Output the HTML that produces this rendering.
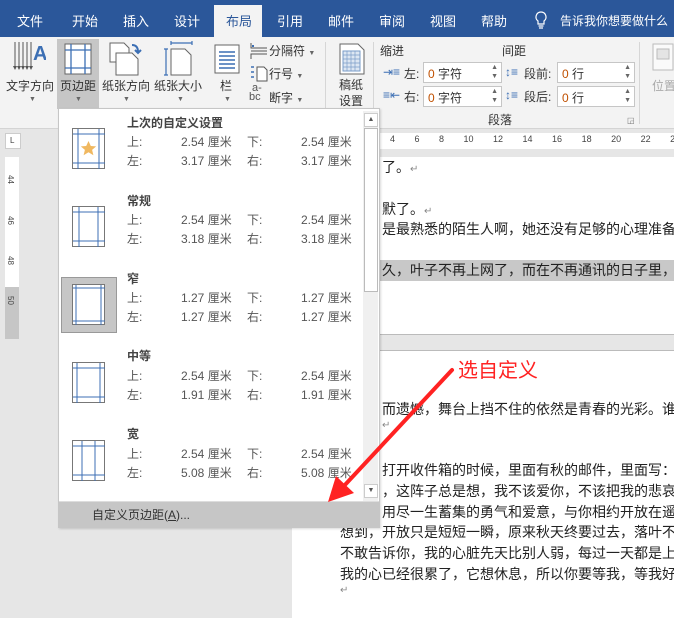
<!DOCTYPE html>
<html><head><meta charset="utf-8"><style>
*{margin:0;padding:0;box-sizing:border-box}
body{width:674px;height:618px;overflow:hidden;position:relative;background:#e6e6e6;font-family:"Liberation Sans","Noto Sans CJK SC",sans-serif;color:#444}
.a{position:absolute;white-space:nowrap}
.tab{position:absolute;top:11px;color:#fff;font-size:13px;white-space:nowrap}
.rl{font-size:12px;color:#333}
.dd{font-size:7px;color:#666}
.box{position:absolute;background:#fff;border:1px solid #c6c6c6;height:21px;font-size:12px;padding:2px 4px;color:#333}
.m{font-size:12px;color:#555}
.mt{font-size:12px;font-weight:bold;color:#444}
.doc{font-size:14px;color:#222}
</style></head><body>
<div class="a" style="left:0;top:0;width:674px;height:37px;background:#2b579a"></div>
<div class="a" style="left:214px;top:5px;width:48px;height:32px;background:#f3f3f3"></div>
<div class="tab" style="left:17px">文件</div>
<div class="tab" style="left:72px">开始</div>
<div class="tab" style="left:123px">插入</div>
<div class="tab" style="left:174px">设计</div>
<div class="tab" style="left:226px;color:#2b579a">布局</div>
<div class="tab" style="left:277px">引用</div>
<div class="tab" style="left:328px">邮件</div>
<div class="tab" style="left:379px">审阅</div>
<div class="tab" style="left:430px">视图</div>
<div class="tab" style="left:481px">帮助</div>
<svg class="a" style="left:534px;top:11px" width="14" height="18" viewBox="0 0 14 18"><path d="M7 1a5 5 0 0 0-3 9v3h6v-3a5 5 0 0 0-3-9zM4.5 15h5M5 17h4" fill="none" stroke="#fff" stroke-width="1.2"/></svg>
<div class="tab" style="left:560px;font-size:12px;top:12px">告诉我你想要做什么</div>
<div class="a" style="left:0;top:37px;width:674px;height:92px;background:#f3f3f3;border-bottom:1px solid #d4d4d4"></div>
<div class="a" style="left:57px;top:39px;width:42px;height:70px;background:#c6c6c6"></div>
<svg class="a" style="left:12px;top:40px" width="34" height="32" viewBox="0 0 34 32"><g stroke="#555" stroke-width="1"><path d="M3 2v26M7 2v26M11 2v26M15 2v26M19 2v26"/></g><g fill="#555"><path d="M1 26h4l-2 4zM5 26h4l-2 4zM9 26h4l-2 4zM13 26h4l-2 4zM17 26h4l-2 4z"/></g><text x="21" y="20" font-size="20" font-weight="bold" fill="#3c6fb4" font-family="Liberation Sans">A</text></svg>
<svg class="a" style="left:64px;top:43px" width="28" height="32" viewBox="0 0 28 32"><rect x="1" y="1" width="26" height="30" fill="#fff" stroke="#666"/><path d="M7 1v30M21 1v30M1 7h26M1 25h26" stroke="#3c6fb4" stroke-width="1.3"/></svg>
<svg class="a" style="left:106px;top:41px" width="38" height="36" viewBox="0 0 38 36"><path d="M4 2h14l5 5v14H4z" fill="#fff" stroke="#666"/><path d="M10 12h16l6 6v16H10z" fill="#fff" stroke="#666"/><path d="M26 4q6 0 6 7M29 9l3 3 3-3" fill="none" stroke="#3c6fb4" stroke-width="2"/></svg>
<svg class="a" style="left:164px;top:41px" width="30" height="36" viewBox="0 0 30 36"><path d="M7 2h21M7 0v4M28 0v4M2 8v26M0 8h4M0 34h4" stroke="#3c6fb4" stroke-width="1.2"/><path d="M7 8h14l6 6v20H7z" fill="#fff" stroke="#666"/></svg>
<svg class="a" style="left:214px;top:44px" width="26" height="30" viewBox="0 0 26 30"><rect x="1" y="1" width="24" height="28" fill="#fff" stroke="#666"/><path d="M5 8h16M5 12h16M5 16h16M5 20h16M5 24h16" stroke="#3c6fb4" stroke-width="1.4"/></svg>
<div class="a rl" style="left:6px;top:77px">文字方向</div>
<div class="a rl" style="left:60px;top:77px">页边距</div>
<div class="a rl" style="left:102px;top:77px">纸张方向</div>
<div class="a rl" style="left:154px;top:77px">纸张大小</div>
<div class="a rl" style="left:220px;top:77px">栏</div>
<div class="a dd" style="left:29px;top:96px">▼</div>
<div class="a dd" style="left:75px;top:96px">▼</div>
<div class="a dd" style="left:123px;top:96px">▼</div>
<div class="a dd" style="left:177px;top:96px">▼</div>
<div class="a dd" style="left:224px;top:96px">▼</div>
<svg class="a" style="left:249px;top:42px" width="20" height="18"><path d="M2 1v5h16M2 17v-5h16M2 9h16" fill="none" stroke="#555"/><path d="M4 3v2" stroke="#3c6fb4" stroke-width="2"/></svg>
<div class="a rl" style="left:269px;top:42px">分隔符 <span class="dd">▼</span></div>
<svg class="a" style="left:249px;top:65px" width="20" height="18"><path d="M2 2h3M2 7h3M2 12h3" stroke="#3c6fb4" stroke-width="1.5"/><path d="M8 2h7l3 3v11H8z" fill="#fff" stroke="#555"/></svg>
<div class="a rl" style="left:269px;top:65px">行号 <span class="dd">▼</span></div>
<div class="a" style="left:249px;top:84px;font-size:11px;color:#555;line-height:9px">&nbsp;a-<br>bc</div>
<div class="a rl" style="left:269px;top:89px">断字 <span class="dd">▼</span></div>
<div class="a" style="left:325px;top:42px;width:1px;height:82px;background:#d6d6d6"></div>
<svg class="a" style="left:339px;top:43px" width="26" height="32"><path d="M1 1h18l6 6v24H1z" fill="#fff" stroke="#666"/><path d="M4 8h17v20H4z" fill="#dce6f2" stroke="#7a9cc8"/><path d="M4 12h17M4 16h17M4 20h17M4 24h17M8 8v20M12 8v20M16 8v20" stroke="#7a9cc8" stroke-width=".7"/></svg>
<div class="a rl" style="left:339px;top:77px;line-height:16px">稿纸<br>设置</div>
<div class="a" style="left:373px;top:42px;width:1px;height:82px;background:#d6d6d6"></div>
<div class="a rl" style="left:380px;top:42px">缩进</div>
<div class="a rl" style="left:502px;top:42px">间距</div>
<div class="a rl" style="left:383px;top:65px;color:#3c6fb4">⇥≡</div>
<div class="a rl" style="left:404px;top:65px">左:</div>
<div class="box" style="left:423px;top:62px;width:79px"><span style="color:#c05000">0</span> 字符<span class="a" style="right:3px;top:0;font-size:7px;line-height:9px;color:#666">▲<br>▼</span></div>
<div class="a rl" style="left:383px;top:88px;color:#3c6fb4">≡⇤</div>
<div class="a rl" style="left:404px;top:88px">右:</div>
<div class="box" style="left:423px;top:86px;width:79px"><span style="color:#c05000">0</span> 字符<span class="a" style="right:3px;top:0;font-size:7px;line-height:9px;color:#666">▲<br>▼</span></div>
<div class="a rl" style="left:505px;top:65px;color:#3c6fb4">↕≡</div>
<div class="a rl" style="left:524px;top:65px">段前:</div>
<div class="box" style="left:557px;top:62px;width:78px"><span style="color:#c05000">0</span> 行<span class="a" style="right:3px;top:0;font-size:7px;line-height:9px;color:#666">▲<br>▼</span></div>
<div class="a rl" style="left:505px;top:88px;color:#3c6fb4">↕≡</div>
<div class="a rl" style="left:524px;top:88px">段后:</div>
<div class="box" style="left:557px;top:86px;width:78px"><span style="color:#c05000">0</span> 行<span class="a" style="right:3px;top:0;font-size:7px;line-height:9px;color:#666">▲<br>▼</span></div>
<div class="a rl" style="left:488px;top:111px">段落</div>
<div class="a" style="left:627px;top:116px;font-size:8px;color:#777">◲</div>
<div class="a" style="left:639px;top:42px;width:1px;height:82px;background:#d6d6d6"></div>
<svg class="a" style="left:652px;top:43px" width="22" height="28"><rect x="1" y="1" width="20" height="26" fill="#fafafa" stroke="#bbb"/><rect x="5" y="6" width="12" height="10" fill="#e4e4e4" stroke="#bbb"/></svg>
<div class="a rl" style="left:652px;top:77px;color:#aaa">位置</div>
<div class="a" style="left:5px;top:133px;width:16px;height:16px;background:#fff;border:1px solid #ccc"></div>
<div class="a" style="left:10px;top:136px;font-size:8px;color:#444">L</div>
<div class="a" style="left:5px;top:157px;width:14px;height:130px;background:#fff"></div>
<div class="a" style="left:5px;top:287px;width:14px;height:52px;background:#c6c6c6"></div>
<div class="a" style="left:6px;top:175px;font-size:8px;transform:rotate(90deg);color:#444">44</div>
<div class="a" style="left:6px;top:216px;font-size:8px;transform:rotate(90deg);color:#444">46</div>
<div class="a" style="left:6px;top:256px;font-size:8px;transform:rotate(90deg);color:#444">48</div>
<div class="a" style="left:6px;top:296px;font-size:8px;transform:rotate(90deg);color:#444">50</div>
<div class="a" style="left:292px;top:133px;width:382px;height:16px;background:#fff"></div>
<div class="a" style="left:390px;top:134px;font-size:9px;color:#444;word-spacing:17px">4 6 8 10 12 14 16 18 20 22 24</div>
<div class="a" style="left:292px;top:157px;width:382px;height:178px;background:#fff;border-bottom:1px solid #bbb"></div>
<div class="a" style="left:292px;top:350px;width:382px;height:268px;background:#fff;border-top:1px solid #bbb"></div>
<div class="a" style="left:292px;top:260px;width:382px;height:21px;background:#c8c8c8"></div>
<div class="a doc" style="left:382px;top:157px">了。<span style="color:#888;font-size:10px">↵</span></div>
<div class="a doc" style="left:382px;top:199px">默了。<span style="color:#888;font-size:10px">↵</span></div>
<div class="a doc" style="left:382px;top:219px">是最熟悉的陌生人啊，她还没有足够的心理准备</div>
<div class="a doc" style="left:382px;top:260px">久，叶子不再上网了，而在不再通讯的日子里，</div>
<div class="a doc" style="left:382px;top:399px">而遗憾，舞台上挡不住的依然是青春的光彩。谁</div>
<div class="a doc" style="left:382px;top:420px;color:#888;font-size:10px">↵</div>
<div class="a doc" style="left:382px;top:460px">打开收件箱的时候，里面有秋的邮件，里面写：</div>
<div class="a doc" style="left:382px;top:481px">，这阵子总是想，我不该爱你，不该把我的悲哀</div>
<div class="a doc" style="left:382px;top:502px">用尽一生蓄集的勇气和爱意，与你相约开放在遥</div>
<div class="a doc" style="left:340px;top:522px">想到，开放只是短短一瞬，原来秋天终要过去，落叶不</div>
<div class="a doc" style="left:340px;top:543px">不敢告诉你，我的心脏先天比别人弱，每过一天都是上</div>
<div class="a doc" style="left:340px;top:564px">我的心已经很累了，它想休息，所以你要等我，等我好</div>
<div class="a doc" style="left:340px;top:585px;color:#888;font-size:10px">↵</div>
<div class="a" style="left:458px;top:354px;font-size:20px;color:#f22">选自定义</div>
<div class="a" style="left:58px;top:108px;width:322px;height:420px;background:#fff;border:1px solid #c6c6c6;box-shadow:1px 1px 2px rgba(0,0,0,.15)"></div>
<div class="a" style="left:363px;top:111px;width:15px;height:390px;background:#f0f0f0"></div>
<div class="a" style="left:364px;top:113px;width:14px;height:14px;background:#fff;border:1px solid #ccc;font-size:7px;text-align:center;line-height:12px;color:#555">▲</div>
<div class="a" style="left:364px;top:128px;width:14px;height:164px;background:#fff;border:1px solid #bbb"></div>
<div class="a" style="left:364px;top:484px;width:14px;height:14px;background:#fff;border:1px solid #ccc;font-size:7px;text-align:center;line-height:12px;color:#555">▼</div>
<div class="a" style="left:59px;top:501px;width:320px;height:26px;background:#c6c6c6;border-top:1px solid #ddd"></div>
<div class="a" style="left:92px;top:506px;font-size:12px;color:#333">自定义页边距(<u>A</u>)...</div>
<div class="a" style="left:61px;top:277px;width:56px;height:56px;background:#c6c6c6;border:1px solid #999"></div>
<svg class="a" style="left:72px;top:128px" width="34" height="42"><rect x=".5" y=".5" width="32" height="40" fill="#fff" stroke="#777"/><path d="M6 1v40M27 1v40M1 6h32M1 35h32" stroke="#3c6fb4"/><path d="M16.5 13l2.3 5 5.4.4-4.1 3.5 1.3 5.3-4.9-2.9-4.9 2.9 1.3-5.3-4.1-3.5 5.4-.4z" fill="#f0b860"/></svg>
<svg class="a" style="left:72px;top:206px" width="34" height="42"><rect x=".5" y=".5" width="32" height="40" fill="#fff" stroke="#777"/><path d="M7 1v40M26 1v40M1 6h32M1 35h32" stroke="#3c6fb4"/></svg>
<svg class="a" style="left:72px;top:284px" width="34" height="42"><rect x=".5" y=".5" width="32" height="40" fill="#fff" stroke="#777"/><path d="M4 1v40M29 1v40M1 4h32M1 37h32" stroke="#3c6fb4"/></svg>
<svg class="a" style="left:72px;top:362px" width="34" height="42"><rect x=".5" y=".5" width="32" height="40" fill="#fff" stroke="#777"/><path d="M5 1v40M28 1v40M1 6h32M1 35h32" stroke="#3c6fb4"/></svg>
<svg class="a" style="left:72px;top:440px" width="34" height="42"><rect x=".5" y=".5" width="32" height="40" fill="#fff" stroke="#777"/><path d="M10 1v40M23 1v40M1 6h32M1 35h32" stroke="#3c6fb4"/></svg>
<div class="a mt" style="left:127px;top:114px">上次的自定义设置</div>
<div class="a m" style="left:127px;top:133px">上:</div><div class="a m" style="left:181px;top:133px">2.54 厘米</div><div class="a m" style="left:247px;top:133px">下:</div><div class="a m" style="left:301px;top:133px">2.54 厘米</div>
<div class="a m" style="left:127px;top:152px">左:</div><div class="a m" style="left:181px;top:152px">3.17 厘米</div><div class="a m" style="left:247px;top:152px">右:</div><div class="a m" style="left:301px;top:152px">3.17 厘米</div>
<div class="a mt" style="left:127px;top:192px">常规</div>
<div class="a m" style="left:127px;top:211px">上:</div><div class="a m" style="left:181px;top:211px">2.54 厘米</div><div class="a m" style="left:247px;top:211px">下:</div><div class="a m" style="left:301px;top:211px">2.54 厘米</div>
<div class="a m" style="left:127px;top:230px">左:</div><div class="a m" style="left:181px;top:230px">3.18 厘米</div><div class="a m" style="left:247px;top:230px">右:</div><div class="a m" style="left:301px;top:230px">3.18 厘米</div>
<div class="a mt" style="left:127px;top:270px">窄</div>
<div class="a m" style="left:127px;top:289px">上:</div><div class="a m" style="left:181px;top:289px">1.27 厘米</div><div class="a m" style="left:247px;top:289px">下:</div><div class="a m" style="left:301px;top:289px">1.27 厘米</div>
<div class="a m" style="left:127px;top:308px">左:</div><div class="a m" style="left:181px;top:308px">1.27 厘米</div><div class="a m" style="left:247px;top:308px">右:</div><div class="a m" style="left:301px;top:308px">1.27 厘米</div>
<div class="a mt" style="left:127px;top:347px">中等</div>
<div class="a m" style="left:127px;top:367px">上:</div><div class="a m" style="left:181px;top:367px">2.54 厘米</div><div class="a m" style="left:247px;top:367px">下:</div><div class="a m" style="left:301px;top:367px">2.54 厘米</div>
<div class="a m" style="left:127px;top:386px">左:</div><div class="a m" style="left:181px;top:386px">1.91 厘米</div><div class="a m" style="left:247px;top:386px">右:</div><div class="a m" style="left:301px;top:386px">1.91 厘米</div>
<div class="a mt" style="left:127px;top:425px">宽</div>
<div class="a m" style="left:127px;top:445px">上:</div><div class="a m" style="left:181px;top:445px">2.54 厘米</div><div class="a m" style="left:247px;top:445px">下:</div><div class="a m" style="left:301px;top:445px">2.54 厘米</div>
<div class="a m" style="left:127px;top:464px">左:</div><div class="a m" style="left:181px;top:464px">5.08 厘米</div><div class="a m" style="left:247px;top:464px">右:</div><div class="a m" style="left:301px;top:464px">5.08 厘米</div>
<svg class="a" style="left:0;top:0" width="674" height="618"><path d="M452 370L343 487" stroke="#f22" stroke-width="4" stroke-linecap="round"/><path d="M328 502l8-26 18 17z" fill="#f22"/></svg>
</body></html>
